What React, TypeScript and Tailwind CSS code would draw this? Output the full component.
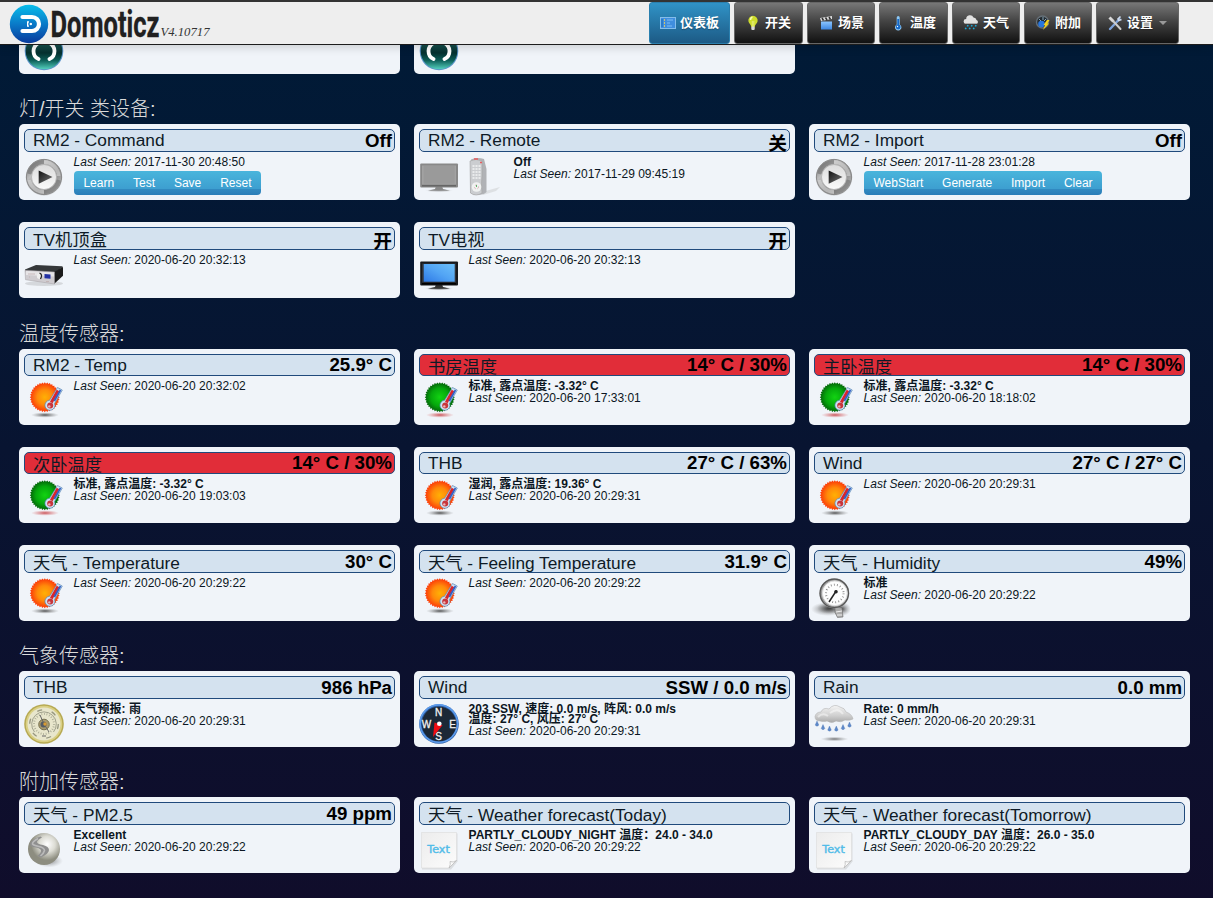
import type { ReactNode } from "react";

type IconProps = { children: ReactNode };

function Icon({ children }: IconProps) {
  return (
    <svg viewBox="0 0 40 40" className="h-10 w-10 shrink-0 overflow-visible">
      {children}
    </svg>
  );
}

function Defs() {
  return (
    <svg className="absolute h-0 w-0" aria-hidden="true">
      <defs>
        <radialGradient id="sun"><stop offset="0" stopColor="#ffb005" /><stop offset="0.5" stopColor="#ff8a0a" /><stop offset="1" stopColor="#fb3409" /></radialGradient>
        <radialGradient id="leaf"><stop offset="0" stopColor="#12d312" /><stop offset="0.6" stopColor="#05a80c" /><stop offset="1" stopColor="#04600a" /></radialGradient>
        <radialGradient id="shade"><stop offset="0" stopColor="#333" stopOpacity="0.85" /><stop offset="1" stopColor="#888" stopOpacity="0" /></radialGradient>
        <radialGradient id="shadeRed"><stop offset="0" stopColor="#c02a30" stopOpacity="0.8" /><stop offset="1" stopColor="#d66" stopOpacity="0" /></radialGradient>
        <linearGradient id="metal" x2="1" y2="1"><stop offset="0" stopColor="#666" /><stop offset="0.3" stopColor="#bdbdbd" /><stop offset="0.6" stopColor="#888" /><stop offset="1" stopColor="#d2d2d2" /></linearGradient>
        <linearGradient id="silver" x2="0" y2="1"><stop offset="0" stopColor="#dcdcdc" /><stop offset="1" stopColor="#fafafa" /></linearGradient>
        <linearGradient id="dark" x2="1" y2="1"><stop offset="0" stopColor="#111" /><stop offset="1" stopColor="#777" /></linearGradient>
        <linearGradient id="screen" x1="1" x2="0" y2="1"><stop offset="0" stopColor="#6cc0fa" /><stop offset="0.5" stopColor="#52a4f4" /><stop offset="1" stopColor="#2d79e6" /></linearGradient>
        <linearGradient id="teal" x2="0" y2="1"><stop offset="0" stopColor="#2c7f77" /><stop offset="0.55" stopColor="#05302f" /><stop offset="0.75" stopColor="#0b5c56" /><stop offset="1" stopColor="#54d0bd" /></linearGradient>
        <radialGradient id="ball" cx="0.6" cy="0.35"><stop offset="0" stopColor="#fff" /><stop offset="0.5" stopColor="#dcdcd4" /><stop offset="1" stopColor="#8d8d80" /></radialGradient>
        <linearGradient id="cloud" x2="0" y2="1"><stop offset="0" stopColor="#f4f4f4" /><stop offset="0.6" stopColor="#cfcfcf" /><stop offset="1" stopColor="#a9a9a9" /></linearGradient>
        <linearGradient id="paper" x2="1" y2="1"><stop offset="0" stopColor="#ececec" /><stop offset="1" stopColor="#fcfcfc" /></linearGradient>
        <linearGradient id="logo" x2="0" y2="1"><stop offset="0" stopColor="#08bdea" /><stop offset="0.5" stopColor="#0a7ac8" /><stop offset="1" stopColor="#083a9c" /></linearGradient>
        <linearGradient id="folder" x2="0" y2="1"><stop offset="0" stopColor="#8cc6ff" /><stop offset="1" stopColor="#3d86e0" /></linearGradient>
      </defs>
    </svg>
  );
}

const teeth = Array.from({ length: 72 }, (_, i) => {
  const angle = (i * Math.PI) / 36;
  const r = i % 2 ? 13.6 : 15;
  return `${(20.8 + r * Math.cos(angle)).toFixed(2)},${(15.2 + r * Math.sin(angle)).toFixed(2)}`;
}).join(" ");

function TempIcon({ green = false }: { green?: boolean }) {
  return (
    <Icon>
      <ellipse cx="21" cy="33" rx="14" ry="2.8" fill={green ? "url(#shadeRed)" : "url(#shade)"} />
      <polygon points={teeth} fill={green ? "url(#leaf)" : "url(#sun)"} />
      <path d="M33.500 5.500 38.300 8 30.600 21.500a5 5 0 1 1-5-3.200Z" fill="#cfe2f3" stroke="#5685b5" strokeWidth="0.7" />
      <path d="M34 8.500 27.300 20.500" stroke="#d8262c" strokeWidth="3" />
      <path d="M36.500 8 30.300 19" stroke="#2f5fc8" strokeWidth="1.700" />
      <circle cx="26.200" cy="23.500" r="3" fill="#c8353c" />
      <circle cx="25.300" cy="24.400" r="1.200" fill="#eab6b8" />
    </Icon>
  );
}

function PlayIcon() {
  return (
    <Icon>
      <circle cx="20" cy="20.400" r="18.300" fill="#aaa" opacity="0.35" />
      <circle cx="20" cy="20" r="17.600" fill="url(#metal)" stroke="#888" />
      <path d="M20 5a15 15 0 0 0-14.700 12M20 35a15 15 0 0 0 14.700-12" stroke="#666" strokeWidth="4" fill="none" opacity="0.5" />
      <path d="M5.300 23A15 15 0 0 0 20 35M20 5a15 15 0 0 1 14.700 14" stroke="#d5d5d5" strokeWidth="3.500" fill="none" opacity="0.6" />
      <circle cx="20" cy="20" r="12.500" fill="url(#silver)" stroke="#aaa" strokeWidth="0.700" />
      <path d="M14.700 13.500 28.500 20.100 14.700 26.700Z" fill="url(#dark)" />
    </Icon>
  );
}

function TvIcon({ off = false }: { off?: boolean }) {
  return (
    <Icon>
      <ellipse cx="20" cy="33.600" rx="14" ry="2" fill="url(#shade)" opacity={off ? 0.4 : 0.8} />
      <path d="M17 29h6l1 3 7 1.700H9L16 32Z" fill={off ? "#888" : "#333"} />
      <rect x="1.200" y="6.500" width="37.800" height="24" rx="1" fill={off ? "#888" : "#17191d"} />
      <rect x="3" y="8.500" width="34" height="19" fill={off ? "#a2a2a2" : "#30333a"} />
      <rect x="4.700" y="9" width="31" height="17.700" fill={off ? "#9a9a9a" : "url(#screen)"} />
      <path d="M3 28.800h34" stroke={off ? "#666" : "#000"} strokeWidth="1.500" />
    </Icon>
  );
}

function RemoteIcon() {
  return (
    <Icon>
      <path d="M18 35 36 30 32 34 19 38Z" fill="#bbb" opacity="0.35" />
      <path d="M7 2.500Q13 0 20 2L22.500 12V35Q20 38.500 10 38L6.500 36V18Z" fill="#b0b2b6" />
      <path d="M6 4Q12 1 18 4V19Q17 26 18 36Q12 40 6.500 36Z" fill="#cbcdd0" stroke="#a5a5a5" strokeWidth="0.600" />
      <path d="M10 2h4M16 5.500h2" stroke="#e65c60" strokeWidth="1.500" />
      <path d="M8.500 9h8M8.500 12h8M8.500 15h8M8.500 18h8M8.500 21h8" stroke="#f3f3f3" strokeWidth="1.500" strokeDasharray="2 1" />
      <circle cx="12.500" cy="30" r="4.800" fill="#f0f2f1" />
      <circle cx="12.500" cy="30" r="2" fill="none" stroke="#dbb" strokeDasharray="2 1.500" />
      <path d="M12.500 28v2" stroke="#5cae6a" />
    </Icon>
  );
}

function SetTopIcon() {
  return (
    <Icon>
      <ellipse cx="20" cy="28.500" rx="19" ry="2.500" fill="#999" opacity="0.3" />
      <path d="M1 14.500 12 10l26 1.200 1 .8-9 6.300L1 17Z" fill="#35383a" />
      <path d="m30 17 9-5v8.800L30 29Z" fill="#1b1b1b" />
      <path d="M1 15.200 30.500 17v12L1.500 24.700Z" fill="#cfccd0" stroke="#a5a0a5" strokeWidth="0.500" />
      <path d="m2 16 28 1.600v4L2 20Z" fill="#e6e4e6" />
      <path d="M20.500 19 26.500 19.400v4.300l-6-.5Z" fill="#2331a3" />
      <ellipse cx="15.500" cy="21" rx="2.700" ry="3" fill="#eee" />
      <path d="M15.500 18q3.500 1.400 1 6" fill="none" stroke="#222" strokeWidth="1.300" />
      <path d="M4 19h7M22 26.500h3M5 22h1" stroke="#baa" strokeWidth="0.700" />
    </Icon>
  );
}

function GaugeIcon() {
  return (
    <Icon>
      <ellipse cx="14" cy="31" rx="17" ry="7" fill="url(#shade)" />
      <ellipse cx="16" cy="30" rx="13" ry="6" fill="url(#shade)" />
      <ellipse cx="28" cy="31" rx="9" ry="7" fill="url(#shade)" />
      <path d="m21 29 7 1 1 9-5.500.5-2.500-5Z" fill="#aaa" stroke="#666" strokeWidth="0.600" />
      <path d="m22 34 6-1M23 37h5" stroke="#eee" />
      <circle cx="20.300" cy="15.300" r="15" fill="#9b9b9b" />
      <circle cx="20.300" cy="15.300" r="14.200" fill="none" stroke="#555" strokeWidth="1.200" />
      <circle cx="20.800" cy="15.300" r="12.400" fill="#fdfdfd" stroke="#ddd" />
      <circle cx="20.800" cy="15.500" r="8.800" fill="none" stroke="#888" strokeWidth="2" strokeDasharray="0.800 2.300" />
      <path d="M15 24 22.500 12.500" stroke="#222" strokeWidth="1.500" />
      <circle cx="22" cy="13.700" r="1.800" fill="#222" />
    </Icon>
  );
}

function BarometerIcon() {
  return (
    <Icon>
      <circle cx="20" cy="20" r="19.800" fill="#b6a952" />
      <circle cx="20" cy="20" r="18.300" fill="#d9cf83" />
      <circle cx="20" cy="20" r="16.500" fill="#e8e6cc" />
      <circle cx="20" cy="20" r="14.300" fill="none" stroke="#5f604d" strokeWidth="1.300" strokeDasharray="5 10" opacity="0.6" />
      <path d="M10.500 28A12.300 12.300 0 1 1 29.500 28" fill="none" stroke="#a0a18c" strokeWidth="1" />
      <circle cx="20" cy="20" r="10" fill="none" stroke="#a8a992" strokeWidth="2" strokeDasharray="0.800 1.800" />
      <circle cx="20" cy="20.500" r="5.300" fill="#a99a6d" stroke="#777252" />
      <circle cx="19.500" cy="20.500" r="3" fill="#555c65" />
      <path d="m16 11 4 9 5 8M18 32h4" fill="none" stroke="#666" strokeWidth="1" />
      <circle cx="21" cy="20" r="1.700" fill="#d89b33" />
    </Icon>
  );
}

function CompassIcon() {
  return (
    <Icon>
      <circle cx="20" cy="20" r="19.800" fill="#2c5da4" />
      <circle cx="19.800" cy="19.600" r="18.700" fill="none" stroke="#5b9aea" strokeWidth="1.600" />
      <circle cx="20" cy="20" r="17.300" fill="#1c2836" />
      <g fill="#f2f2f2" stroke="#f2f2f2" strokeWidth="0.300" fontFamily="Liberation Sans, sans-serif" fontSize="10" textAnchor="middle">
        <text x="19.700" y="11.600">N</text>
        <text x="33.500" y="23.700">E</text>
        <text x="19.700" y="36">S</text>
        <text x="7.500" y="24">W</text>
      </g>
      <path d="m15.500 18.500 8 2.800L14 33Z" fill="#f00d12" />
      <circle cx="20.300" cy="19.700" r="2.300" fill="#fff" />
    </Icon>
  );
}

function RainIcon() {
  return (
    <Icon>
      <ellipse cx="20.500" cy="35" rx="14" ry="2.400" fill="url(#shade)" opacity="0.8" />
      <path d="M6 17Q1 17 1 12.500Q2 8 7 8Q9 3 15 5Q20-1 26 3Q31 4 32 8Q38 10 39 15Q35 17 31 16Q27 19 22 17Q18 20 13 17Q10 18 6 17Z" fill="url(#cloud)" stroke="#b5b5b5" strokeWidth="0.600" />
      <path d="M4 13q5-5 10-1M16 9q8-6 13 1" stroke="#fff" strokeWidth="2" fill="none" opacity="0.45" />
      <g fill="#5d89cb" stroke="#4168a8" strokeWidth="0.300">
        <path d="m3 17-1.800 4a2 2 0 0 0 3.600 0Z" />
        <path d="m9 20.500-1.800 4a2 2 0 0 0 3.600 0Z" />
        <path d="m15.500 22-1.800 4a2 2 0 0 0 3.600 0Z" />
        <path d="m22.300 22-1.800 4a2 2 0 0 0 3.600 0Z" />
        <path d="m29 20.500-1.800 4a2 2 0 0 0 3.600 0Z" />
        <path d="m35.500 18-1.800 4a2 2 0 0 0 3.600 0Z" />
      </g>
    </Icon>
  );
}

function BallIcon() {
  return (
    <Icon>
      <ellipse cx="25" cy="31" rx="14" ry="6.500" fill="url(#shade)" opacity="0.7" />
      <circle cx="20" cy="19" r="16" fill="url(#ball)" />
      <path d="M16.500 6.500Q6 10 6 14Q6 17 12 17.500Q17 18.500 17 21Q17 23 13.500 26L17 27.500Q25 23.500 25 20Q25 16.500 19 15Q13 14 13 12Q13 10 18 7.500Z" fill="#8f8f8f" />
      <path d="M14 8.500Q8 12 8.500 14Q9.500 15.500 14 16.200Q20.500 17.500 20.500 20.500Q20 23 16.500 26" fill="none" stroke="#bababa" strokeWidth="1.600" />
    </Icon>
  );
}

function TextIcon() {
  return (
    <Icon>
      <path d="M3 3.500h35.500v28L32 39.500H3Z" fill="#999" opacity="0.25" />
      <path d="M2.500 2.500h35v28L30 38H2.500Z" fill="url(#paper)" stroke="#dedede" strokeWidth="0.700" />
      <path d="M30 38Q32 34 31 31.500 34 33 37.500 30.500Z" fill="#fafafa" stroke="#b5b5b5" strokeWidth="0.700" />
      <text x="8.300" y="23" fill="#52bce8" stroke="#52bce8" strokeWidth="0.400" fontFamily="DejaVu Sans, sans-serif" fontSize="10.500" textLength="22.500" lengthAdjust="spacingAndGlyphs">Text</text>
    </Icon>
  );
}

function SceneIcon() {
  return (
    <Icon>
      <circle cx="20" cy="20" r="19.300" fill="#5a93c9" />
      <circle cx="20" cy="20" r="18.300" fill="url(#teal)" />
      <path d="M16 11Q9.500 14.500 9.500 20q0 6 5 8M24 11q6.500 3.500 6.500 9 0 6-5 8" fill="none" stroke="#fff" strokeWidth="3.800" strokeLinecap="round" />
    </Icon>
  );
}

type Device = {
  name: string;
  value?: string;
  alert?: boolean;
  icon: ReactNode;
  lines?: string[];
  tight?: boolean;
  seen: string;
  buttons?: string[];
};

const hasHan = (text: string) => /[\u4e00-\u9fff]/.test(text);

function Card({ device, short }: { device: Device; short: boolean }) {
  const { name, value, alert, icon, lines = [], tight, seen, buttons } = device;
  const titleShift = hasHan(name) ? "pt-0.5" : "pt-0";
  const valueShift = value && hasHan(value) ? "pt-1" : short ? "pt-0" : "pt-px";
  return (
    <article className="h-[76px] rounded-[5px] bg-[#f0f4f9] px-[5px] pt-[5px]">
      <header
        className={`flex justify-between rounded-[5px] border border-[#204a7c] pr-0.5 pl-2 ${short ? "h-[22px]" : "h-[23px]"} ${alert ? "bg-[#e12d39]" : "bg-[#d4e2ef]"}`}
      >
        <h2 className={`whitespace-nowrap text-[17.300px] leading-5 text-[#0e1a26] ${titleShift}`}>{name}</h2>
        <span className={`whitespace-nowrap text-[18.700px] leading-5 font-bold text-black ${valueShift}`}>{value}</span>
      </header>
      <div className={`flex ${short ? "pt-1.5" : "pt-[5px]"}`}>
        <div className="flex gap-[5px]">{icon}</div>
        <div className={`pl-[9.600px] text-xs leading-3 whitespace-nowrap text-[#0b1622] ${short ? "-mt-[2px]" : "-mt-px"}`}>
          {lines.map((line) => (
            <p key={line} className={`font-bold ${tight ? "h-[10px]" : "h-3"}`}>{line}</p>
          ))}
          <p className={tight ? "mt-0.5" : ""}>
            <em>Last Seen:</em> {seen}
          </p>
          {buttons && (
            <div className="mt-[3px] ml-[0.400px] flex h-6 w-fit overflow-hidden rounded bg-[linear-gradient(#49b5dc_0%,#3d9fd0_73%,#3189c0_77%,#2a7db8_100%)]">
              {buttons.map((label) => (
                <button key={label} className="px-[9.450px] text-xs text-white">{label}</button>
              ))}
            </div>
          )}
        </div>
      </div>
    </article>
  );
}

const switches: Device[] = [
  { name: "RM2 - Command", value: "Off", icon: <PlayIcon />, seen: "2017-11-30 20:48:50", buttons: ["Learn", "Test", "Save", "Reset"] },
  { name: "RM2 - Remote", value: "关", icon: <><TvIcon off /><RemoteIcon /></>, lines: ["Off"], seen: "2017-11-29 09:45:19" },
  { name: "RM2 - Import", value: "Off", icon: <PlayIcon />, seen: "2017-11-28 23:01:28", buttons: ["WebStart", "Generate", "Import", "Clear"] },
  { name: "TV机顶盒", value: "开", icon: <SetTopIcon />, seen: "2020-06-20 20:32:13" },
  { name: "TV电视", value: "开", icon: <TvIcon />, seen: "2020-06-20 20:32:13" },
];

const dew = "标准, 露点温度: -3.32° C";

const temps: Device[] = [
  { name: "RM2 - Temp", value: "25.9° C", icon: <TempIcon />, seen: "2020-06-20 20:32:02" },
  { name: "书房温度", value: "14° C / 30%", alert: true, icon: <TempIcon green />, lines: [dew], seen: "2020-06-20 17:33:01" },
  { name: "主卧温度", value: "14° C / 30%", alert: true, icon: <TempIcon green />, lines: [dew], seen: "2020-06-20 18:18:02" },
  { name: "次卧温度", value: "14° C / 30%", alert: true, icon: <TempIcon green />, lines: [dew], seen: "2020-06-20 19:03:03" },
  { name: "THB", value: "27° C / 63%", icon: <TempIcon />, lines: ["湿润, 露点温度: 19.36° C"], seen: "2020-06-20 20:29:31" },
  { name: "Wind", value: "27° C / 27° C", icon: <TempIcon />, seen: "2020-06-20 20:29:31" },
  { name: "天气 - Temperature", value: "30° C", icon: <TempIcon />, seen: "2020-06-20 20:29:22" },
  { name: "天气 - Feeling Temperature", value: "31.9° C", icon: <TempIcon />, seen: "2020-06-20 20:29:22" },
  { name: "天气 - Humidity", value: "49%", icon: <GaugeIcon />, lines: ["标准"], seen: "2020-06-20 20:29:22" },
];

const weather: Device[] = [
  { name: "THB", value: "986 hPa", icon: <BarometerIcon />, lines: ["天气预报: 雨"], seen: "2020-06-20 20:29:31" },
  { name: "Wind", value: "SSW / 0.0 m/s", icon: <CompassIcon />, lines: ["203 SSW, 速度: 0.0 m/s, 阵风: 0.0 m/s", "温度: 27° C, 风压: 27° C"], tight: true, seen: "2020-06-20 20:29:31" },
  { name: "Rain", value: "0.0 mm", icon: <RainIcon />, lines: ["Rate: 0 mm/h"], seen: "2020-06-20 20:29:31" },
];

const extras: Device[] = [
  { name: "天气 - PM2.5", value: "49 ppm", icon: <BallIcon />, lines: ["Excellent"], seen: "2020-06-20 20:29:22" },
  { name: "天气 - Weather forecast(Today)", icon: <TextIcon />, lines: ["PARTLY_CLOUDY_NIGHT 温度：24.0 - 34.0"], seen: "2020-06-20 20:29:22" },
  { name: "天气 - Weather forecast(Tomorrow)", icon: <TextIcon />, lines: ["PARTLY_CLOUDY_DAY 温度：26.0 - 35.0"], seen: "2020-06-20 20:29:22" },
];

function Section({ title, devices, shortRows = 0, tall = false }: { title: string; devices: Device[]; shortRows?: number; tall?: boolean }) {
  return (
    <section>
      <h1 className={`text-[20px] leading-5 font-light text-[#dadada] ${tall ? "h-[51px] pt-[26px]" : "h-[50px] pt-[25px]"}`}>{title}</h1>
      <div className="grid grid-cols-[repeat(3,381px)] gap-x-[14px] gap-y-[22px]">
        {devices.map((device, i) => (
          <Card key={device.name} device={device} short={i < shortRows * 3} />
        ))}
      </div>
    </section>
  );
}

function MenuIcon({ children }: IconProps) {
  return <svg viewBox="0 0 16 16" className="h-4 w-4 shrink-0">{children}</svg>;
}

const menu: { label: string; width: string; icon: ReactNode }[] = [
  {
    label: "仪表板",
    width: "w-[81px]",
    icon: <><rect x="0.500" y="2.500" width="15" height="11" fill="#3f8ede" stroke="#83bdeb" /><path d="M4 5h1M4 8h1M4 11h1" stroke="#ffd34d" strokeWidth="1.500" /><path d="M7 5h6M7 8h3M7 11h5" stroke="#7fbdf5" /><path d="M2 4v8" stroke="#1768b8" /></>,
  },
  {
    label: "开关",
    width: "w-[69px]",
    icon: <><path d="M8 0.800a4.700 4.700 0 0 0-4.600 5.500C3.800 8.600 6 9.500 6.300 12h3.400c.3-2.500 2.500-3.400 2.900-5.700A4.700 4.700 0 0 0 8 .8Z" fill="#cddc2c" /><path d="M5.500 5q0-2.500 2-2.800" stroke="#f8fbb5" strokeWidth="1.500" fill="none" /><path d="M7.300 6v6M8.800 6v6" stroke="#eef49a" strokeWidth="0.700" /><rect x="6.300" y="11.500" width="3.400" height="3.500" rx="1" fill="#d8d8d8" /></>,
  },
  {
    label: "场景",
    width: "w-[68px]",
    icon: <><path d="M3 6.500h11V14.500H3Z" fill="url(#folder)" /><path d="m2 3 12-2v3L3 6Z" fill="#ddd" /><path d="m4 3 1.500 2.500M7.500 2.500 9 5M11 2l1.500 2.500" stroke="#333" strokeWidth="1.500" /></>,
  },
  {
    label: "温度",
    width: "w-[69px]",
    icon: <><path d="M6.700 2.500a1.500 1.500 0 0 1 3 0v7a3.200 3.200 0 1 1-3 0Z" fill="#8dc8f4" /><path d="M8.200 4v8" stroke="#1769c7" strokeWidth="1.800" /><circle cx="8.200" cy="12" r="2.400" fill="#1769c7" /><circle cx="7.500" cy="11.500" r="0.700" fill="#fff" /></>,
  },
  {
    label: "天气",
    width: "w-[68px]",
    icon: <><path d="M3 9a2.500 2.500 0 0 1 .2-5A3.800 3.800 0 0 1 10.500 2.500a3 3 0 0 1 3 2.500A2.100 2.100 0 0 1 13.500 9Z" fill="#e1e1e1" /><path d="M2 8.500h12" stroke="#aaa" /><path d="m5 10-.6 1.500M9 10l-.6 1.500M13 10l-.6 1.500M3 12.700l-.6 1.500M7 12.700l-.6 1.500M11 12.700l-.6 1.500" stroke="#1ba8d6" strokeWidth="1.600" /></>,
  },
  {
    label: "附加",
    width: "w-[68px]",
    icon: <><circle cx="7.500" cy="7" r="6" fill="#222a30" stroke="#667078" strokeWidth="1.400" /><path d="m4 4 2 2M8 2v3M11 4 9 6" stroke="#87a6b8" /><circle cx="6.500" cy="9" r="3.300" fill="#2876dd" /><path d="m12 5 2.500 0-2 3.500h1.500L8 15l2-5H8.500Z" fill="#f2cf1d" /></>,
  },
  {
    label: "设置",
    width: "w-[83px]",
    icon: <><path d="m3 14 9.500-10" stroke="#7da3dc" strokeWidth="2.400" strokeLinecap="round" /><path d="m13.500 1.500-2.500 2.500.8 1.600 2.700-1" stroke="#ccd9ea" strokeWidth="1.600" fill="none" /><path d="m2.500 2.500 4 4" stroke="#d9d9d9" strokeWidth="3" /><path d="m6.500 6.500 7 7.500" stroke="#ccc" strokeWidth="2" strokeLinecap="round" /></>,
  },
];

function TopBar() {
  return (
    <nav className="relative z-10 flex h-[45px] border-t-2 border-b border-t-[#333] border-b-[#1c1c1c] bg-[#eeeeee] shadow-[0_1px_10px_rgba(0,0,0,0.2)]">
      <svg viewBox="0 2 220 42" className="h-[42px] w-[220px] overflow-visible">
        <circle cx="29" cy="24" r="19.200" fill="url(#logo)" />
        <path d="M22.500 17h9.500a7 7 0 0 1 0 14h-9.500" fill="none" stroke="#fff" strokeWidth="4.200" strokeLinecap="round" />
        <path d="M27 21.300h2v5.400h-2Z" fill="#fff" />
        <circle cx="30.800" cy="24" r="1.900" fill="#fff" stroke="#0a76c5" strokeWidth="1.300" />
        <text x="50.500" y="37" fill="#202020" stroke="#202020" strokeWidth="0.300" fontFamily="Roboto, sans-serif" fontWeight="700" fontSize="36" textLength="109" lengthAdjust="spacingAndGlyphs">Domoticz</text>
        <text x="160.500" y="36" fill="#333" fontFamily="Liberation Serif, serif" fontStyle="italic" fontSize="13" textLength="49" lengthAdjust="spacingAndGlyphs">V4.10717</text>
      </svg>
      <ul className="ml-[429px] flex gap-1">
        {menu.map((item, i) => (
          <li
            key={item.label}
            className={`flex h-[42px] items-center gap-1 rounded-[3px] border pl-2.5 text-[13px] font-bold text-white ${item.width} ${i === 0 ? "border-[#2a7fae] bg-[linear-gradient(#3093c7,#1c5a85)]" : "border-[#666] bg-[linear-gradient(#777_0%,#444_45%,#111_100%)]"}`}
          >
            <MenuIcon>{item.icon}</MenuIcon>
            <span className="whitespace-nowrap leading-4 [text-shadow:0_1px_1px_rgba(0,0,0,0.3)]">{item.label}</span>
            {i === menu.length - 1 && (
              <svg viewBox="0 0 8 4" className="ml-0.5 h-1 w-2"><path d="M0 0h8L4 4Z" fill="#999" /></svg>
            )}
          </li>
        ))}
      </ul>
    </nav>
  );
}

export default function App() {
  return (
    <div className="h-[898px] overflow-hidden bg-[linear-gradient(#001b37,#100d2b)] font-['Liberation_Sans','Noto_Sans_CJK_SC',sans-serif]">
      <Defs />
      <TopBar />
      <main className="pl-[19px]">
        <div className="grid h-[29px] grid-cols-[repeat(3,381px)] gap-x-[14px]">
          {[0, 1].map((n) => (
            <div key={n} className="flex items-end overflow-hidden rounded-b-[5px] bg-[#f0f4f9] px-[5px] pb-[3px]">
              <SceneIcon />
            </div>
          ))}
        </div>
        <Section title="灯/开关 类设备:" devices={switches} />
        <Section title="温度传感器:" devices={temps} shortRows={2} tall />
        <Section title="气象传感器:" devices={weather} />
        <Section title="附加传感器:" devices={extras} />
      </main>
    </div>
  );
}
